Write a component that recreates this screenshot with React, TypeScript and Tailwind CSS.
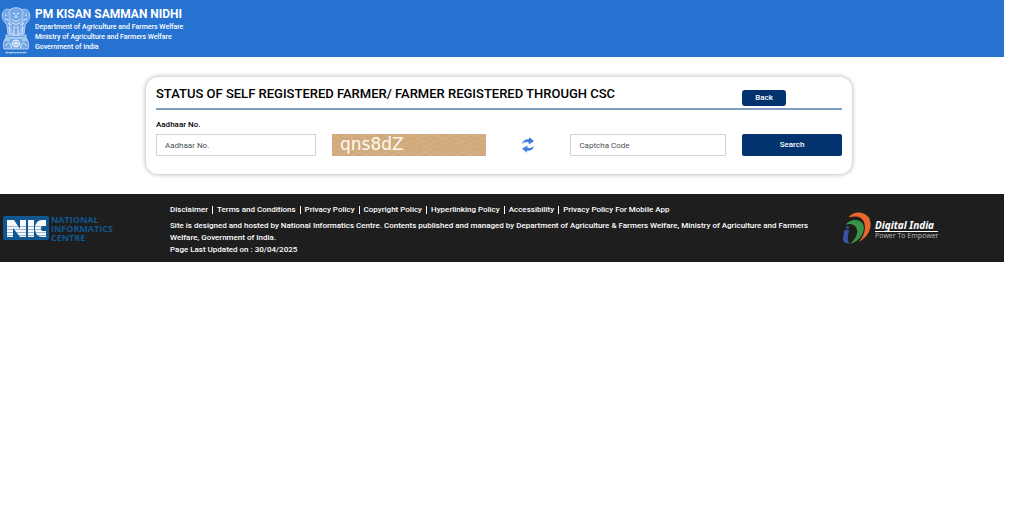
import { useState } from "react";

const links = [
  "Disclaimer",
  "Terms and Conditions",
  "Privacy Policy",
  "Copyright Policy",
  "Hyperlinking Policy",
  "Accessibility",
  "Privacy Policy For Mobile App",
];

function Emblem() {
  return (
    <svg viewBox="0 0 30 48" className="h-12 w-[30px] shrink-0" fill="none" stroke="#c3daf7" strokeWidth="0.9" aria-label="State emblem of India" role="img">
      <g fill="#9dc1f0" fillOpacity="0.65">
        <path d="M9 3c2-3 10-3 12 0 2 2 1 6 0 8l1 10-3 7h-8l-3-7 1-10c-1-2-2-6 0-8Z" />
        <path d="M9 3C6 1 2 3 1.500 7c-1 3 .5 5 1.500 7l3 4 1 9h5" />
        <path d="M21 3c3-2 7 0 7.500 4 1 3-.5 5-1.500 7l-3 4-1 9h-5" />
        <path d="M5 28h20v3H5z" />
        <path d="M5 31c-3 3-3 8-2 11h24c1-3 1-8-2-11Z" />
      </g>
      <path d="M12 6.500h2M16 6.500h2M13 9.500c1 1 3 1 4 0M15 7v2M11 12c2 3 6 3 8 0M11 15c2 3 6 3 8 0M12 19c2 2 4 2 6 0M4 8h2M24 8h2M4 12l4 1M26 12l-4 1M7 16l3 2M23 16l-3 2M13 21v7M17 21v7M8 20l1 7M22 20l-1 7" stroke="#f0f6fe" />
      <circle cx="15" cy="36.500" r="3.600" stroke="#ffffff" />
      <path d="M15 33v7.200M11.400 36.500h7.200M12.500 34l5 5M17.500 34l-5 5M5 39c1-4 4-4 5-1v3M25 39c-1-4-4-4-5-1v3M4 33h5M21 33h5" stroke="#e6f0fd" />
      <path d="M4 45.500h22M6 44.500v2.500M9 45v2M11 44.500v2.500M14 45v2M17 44.500v2.500M20 45v2M23 44.500v2.500" strokeWidth="0.7" />
    </svg>
  );
}

function Captcha() {
  return (
    <svg className="h-[22px] w-full" role="img" aria-label="Captcha image">
      <defs>
        <pattern id="weave" width="13" height="11" patternUnits="userSpaceOnUse">
          <rect width="13" height="11" fill="#d2ab80" />
          <path d="M1.500 0v3M5.500 2v4M9.500 5v4M3.500 6v3M7.500 0v2M11.500 2v3" stroke="#ccb06c" />
          <path d="M0 4.500h3M6 7.500h3M4 1.500h2M8 3.500h3M1 9.500h3M10 10.500h2" stroke="#d0a284" />
          <path d="M2 1.500h2M0 7.500h2M6 4.500h2M8 9.500h2" stroke="#dab88e" />
        </pattern>
      </defs>
      <rect width="100%" height="100%" fill="url(#weave)" />
      <text x="8" y="16" fontSize="17" fill="#fffaf0" fontFamily="DejaVu Sans, sans-serif">
        qns8dZ
      </text>
    </svg>
  );
}

function RefreshIcon() {
  return (
    <svg viewBox="0 0 14 16" className="h-4 w-3.5">
      <defs>
        <linearGradient id="blue" x1="1" y1="0" x2="0" y2="1">
          <stop offset="0" stopColor="#2f62c8" />
          <stop offset="1" stopColor="#4d9af0" />
        </linearGradient>
      </defs>
      <path d="M1 7C1.500 3.500 4.500 2 8 2.300L8.200 0.300L13 4.200L7.500 7.500L7.700 5.200C5 4.600 3 5.200 1 7Z" fill="url(#blue)" />
      <path d="M13 9C12.500 12.500 9.500 14 6 13.700L5.800 15.700L1 11.800L6.500 8.500L6.300 10.800C9 11.400 11 10.800 13 9Z" fill="url(#blue)" />
    </svg>
  );
}

function NicLogo() {
  return (
    <div className="flex items-center gap-0.5 pb-1" role="img" aria-label="National Informatics Centre">
      <svg viewBox="0 0 46 24" className="h-6 w-[46px] shrink-0">
        <rect width="46" height="24" rx="2" fill="#11568f" />
        <g fill="#f4f7fb">
          <path d="M4 4h7l6 9V4h6v17h-6L10 12v9H4Z" />
          <path d="M25 4h6v17h-6z" />
          <path d="M43 4h-4c-4 0-7 3-7 8.500S35 21 39 21h4v-6h-3c-1.500 0-2-1-2-2.500S38.500 10 40 10h3Z" />
        </g>
        <path d="M3 10.500h40M3 13.500h40M3 16.500h40M3 19.500h40" stroke="#11568f" strokeOpacity="0.4" />
      </svg>
      <div className="font-['Open_Sans',sans-serif] text-[9px] leading-[9px] font-bold text-[#11568f]">
        <div>NATIONAL</div>
        <div>INFORMATICS</div>
        <div>CENTRE</div>
      </div>
    </div>
  );
}

function DigitalIndiaLogo() {
  return (
    <div className="flex items-center gap-1 pl-[3px]" role="img" aria-label="Digital India, Power To Empower">
      <svg viewBox="0 0 28 32" className="mb-1 h-8 w-7 shrink-0">
        <path d="M5.500 5.500C10-1.500 21-1 25.500 5c5 8 1 20-10 25 6-6 8-15 5-21C18 4 12 3.500 5.500 5.500Z" fill="#e9672f" />
        <path d="M2.500 13c4-6 14-7 17.500-1 3 7-2 17-13 19.800C13 27 16 20 13 15.500 11 12 7 11 2.500 13Z" fill="#369447" />
        <path d="M1.500 18h4.500l-1 6c-.5 4 0 6 2 7.500C1.500 32-1 29 .2 25Z" fill="#3953a5" />
        <circle cx="4.500" cy="15.500" r="1.500" fill="#3953a5" />
      </svg>
      <div className="text-white">
        <div className="border-b border-white font-['Noto_Sans',sans-serif] text-[10px] leading-[11px] font-bold italic">Digital India</div>
        <div className="font-['Open_Sans',sans-serif] text-[7px] leading-2 text-[#bdbdbd]">Power To Empower</div>
      </div>
    </div>
  );
}

export default function App() {
  const [aadhaar, setAadhaar] = useState("");
  const [code, setCode] = useState("");
  const field =
    "h-[22px] w-full min-w-0 border border-[#ced4da] bg-white px-2 text-[8px] text-[#495057] placeholder:text-[#495057] placeholder:opacity-100";

  return (
    <div className="mr-5 font-[Roboto,sans-serif] text-[8px] text-black">
      <header className="flex h-[57px] items-center gap-1 bg-[#2672d1] px-px pt-1 text-white">
        <Emblem />
        <div className="pb-1 font-medium">
          <h1 className="text-[12px] leading-4 font-bold">PM KISAN SAMMAN NIDHI</h1>
          <p className="text-[7px] leading-[10px]">Department of Agriculture and Farmers Welfare</p>
          <p className="text-[7px] leading-[10px]">Ministry of Agriculture and Farmers Welfare</p>
          <p className="text-[7px] leading-[10px]">Government of India</p>
        </div>
      </header>

      <main className="px-[146px] py-5">
        <form
          onSubmit={(e) => e.preventDefault()}
          className="mr-1.5 rounded-xl px-2.5 pt-[9px] pb-[18px] shadow-[0_0_5px_rgba(0,0,0,0.35)]"
        >
          <div className="flex items-start justify-between border-b-2 border-[#7f9fc0] pb-0.5">
            <h2 className="text-[13px] leading-4 font-medium whitespace-nowrap">
              STATUS OF SELF REGISTERED FARMER/ FARMER REGISTERED THROUGH CSC
            </h2>
            <button type="button" className="mt-1 mr-14 h-4 w-11 rounded-[3px] bg-[#03336e] text-[8px] font-medium text-white">
              Back
            </button>
          </div>
          <div className="mt-2.5 grid grid-cols-[160fr_155fr_52fr_156fr_100fr] items-end gap-x-4">
            <div>
              <label htmlFor="aadhaar" className="mb-1 block leading-[10px] font-medium">
                Aadhaar No.
              </label>
              <input id="aadhaar" className={field} placeholder="Aadhaar No." value={aadhaar} onChange={(e) => setAadhaar(e.target.value)} />
            </div>
            <Captcha />
            <button type="button" aria-label="Refresh captcha" className="flex h-[22px] items-center justify-center">
              <RefreshIcon />
            </button>
            <input aria-label="Captcha Code" className={field} placeholder="Captcha Code" value={code} onChange={(e) => setCode(e.target.value)} />
            <button type="submit" className="h-[22px] rounded-[2px] bg-[#03336e] text-[8px] font-medium text-white">
              Search
            </button>
          </div>
        </form>
      </main>

      <footer className="grid grid-cols-[168fr_672fr_164fr] items-center bg-[#1e1e1e] pt-2.5 pb-1.5 font-medium text-white">
        <div className="pl-[3px]">
          <NicLogo />
        </div>
        <div className="px-0.5">
          <ul className="flex pb-1 leading-3">
            {links.map((name, i) => (
              <li key={name} className="flex items-center">
                {i > 0 && <span className="mx-1 h-2 w-px bg-white" />}
                <a href="#">{name}</a>
              </li>
            ))}
          </ul>
          <p className="pr-7 leading-3">
            Site is designed and hosted by National Informatics Centre. Contents published and managed by Department of Agriculture &amp; Farmers Welfare, Ministry of Agriculture and Farmers Welfare, Government of India.
          </p>
          <p className="leading-3">Page Last Updated on : 30/04/2025</p>
        </div>
        <DigitalIndiaLogo />
      </footer>
    </div>
  );
}
